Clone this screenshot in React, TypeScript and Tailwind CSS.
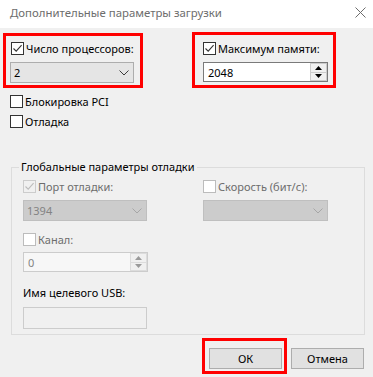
import React from 'react';

type CheckProps = { checked?: boolean; disabled?: boolean };

const Check: React.FC<CheckProps> = ({ checked, disabled }) => (
  <span
    className={`w-[13px] h-[13px] shrink-0 border flex items-center justify-center ${
      disabled ? (checked ? 'border-[#cccccc] bg-[#f0f0f0]' : 'border-[#bcbcbc] bg-white') : 'border-[#333333] bg-white'
    }`}
  >
    {checked && (
      <svg width="11" height="11" viewBox="0 0 11 11">
        <path d="M1.5 5.5 L4.2 8.2 L9.6 2.2" fill="none" stroke={disabled ? '#bcbcbc' : '#333333'} strokeWidth="1.1" />
      </svg>
    )}
  </span>
);

const CheckRow: React.FC<CheckProps & { label: string; className?: string }> = ({ label, checked, disabled, className }) => (
  <div className={`flex items-center h-[13px] gap-[2px] whitespace-nowrap ${className ?? ''}`}>
    <Check checked={checked} disabled={disabled} />
    <span className={`leading-none ${disabled ? 'text-[#6d6d6d]' : 'text-black'}`}>{label}</span>
  </div>
);

const Chevron: React.FC<{ color: string }> = ({ color }) => (
  <svg width="10" height="6" viewBox="0 0 10 6">
    <path d="M0.5 0.5 L5 5 L9.5 0.5" fill="none" stroke={color} strokeWidth="1" />
  </svg>
);

const Select: React.FC<{ value?: string; disabled?: boolean; className?: string }> = ({ value, disabled, className }) => (
  <div
    className={`w-[124px] h-[21px] border flex items-center justify-between pl-[3px] pr-[4px] ${
      disabled ? 'bg-[#cccccc] border-[#bfbfbf] text-[#838383]' : 'bg-[#e5e5e5] border-[#adadad] text-black'
    } ${className ?? ''}`}
  >
    <span className="leading-none">{value}</span>
    <Chevron color={disabled ? '#a6a6a6' : '#3c3c3c'} />
  </div>
);

const Spin: React.FC<{ value: string; disabled?: boolean; className?: string }> = ({ value, disabled, className }) => {
  const arrow = disabled ? '#9a9a9a' : '#000000';
  return (
    <div
      className={`w-[125px] h-[20px] border flex ${
        disabled ? 'bg-[#f7f7f7] border-[#cccccc] text-[#838383]' : 'bg-white border-[#7a7a7a] text-black'
      } ${className ?? ''}`}
    >
      <div className="flex-1 flex items-center pl-[4px] leading-none">{value}</div>
      <div className="w-[17px] flex flex-col">
        <div className={`flex-1 border flex items-center justify-center ${disabled ? 'border-[#dcdcdc] bg-[#f0f0f0]' : 'border-[#cccccc] bg-[#f0f0f0]'}`}>
          <svg width="7" height="4" viewBox="0 0 7 4">
            <path d="M0 4 L3.5 0 L7 4 Z" fill={arrow} />
          </svg>
        </div>
        <div className={`flex-1 border-x border-b flex items-center justify-center ${disabled ? 'border-[#dcdcdc] bg-[#f0f0f0]' : 'border-[#cccccc] bg-[#f0f0f0]'}`}>
          <svg width="7" height="4" viewBox="0 0 7 4">
            <path d="M0 0 L7 0 L3.5 4 Z" fill={arrow} />
          </svg>
        </div>
      </div>
    </div>
  );
};

const Button: React.FC<{ label: string }> = ({ label }) => (
  <div className="w-[73px] h-[21px] bg-[#e1e1e1] border border-[#adadad] flex items-center justify-center leading-none text-black">
    {label}
  </div>
);

export default function App() {
  return (
    <div className="w-[373px] h-[377px] bg-[#f0f0f0] overflow-hidden text-[11px] font-['Segoe_UI','Noto_Sans',sans-serif]">
      {/* Title bar */}
      <div className="h-[28px] bg-white flex items-center justify-between pl-[10px] pr-[6px] pb-[3px]">
        <span className="text-[#6d6d6d] leading-none text-[11.4px]">Дополнительные параметры загрузки</span>
        <svg width="11" height="11" viewBox="0 0 11 11" className="mr-[1px]">
          <path d="M0.5 0.5 L10.5 10.5 M10.5 0.5 L0.5 10.5" stroke="#6d6d6d" strokeWidth="1" />
        </svg>
      </div>

      {/* Top highlighted row */}
      <div className="flex items-start">
        <div className="ml-[3px] mt-[5px] w-[140px] h-[55px] border-[3px] border-[#ff0000] pl-[5px] pt-[6px]">
          <CheckRow label="Число процессоров:" checked />
          <Select value="2" className="mt-[7px] -ml-[1px]" />
        </div>
        <div className="ml-[49px] mt-[4px] w-[144px] h-[56px] border-[3px] border-[#ff0000] pl-[8px] pt-[7px]">
          <CheckRow label="Максимум памяти:" checked />
          <Spin value="2048" className="mt-[7px]" />
        </div>
      </div>

      <CheckRow label="Блокировка PCI" className="ml-[10px] mt-[7px]" />
      <CheckRow label="Отладка" className="ml-[10px] mt-[7px]" />

      {/* Group box */}
      <div className="relative ml-[11px] mt-[39px] w-[354px] h-[168px] border border-[#dcdcdc] pl-[11px] pt-[12px]">
        <span className="absolute -top-[7px] left-[7px] px-[2px] bg-[#f0f0f0] leading-none text-black whitespace-nowrap">
          Глобальные параметры отладки
        </span>
        <div className="flex">
          <div className="w-[180px]">
            <CheckRow label="Порт отладки:" checked disabled />
            <Select value="1394" disabled className="mt-[7px]" />
          </div>
          <div>
            <CheckRow label="Скорость (бит/с):" disabled />
            <Select disabled className="mt-[7px] w-[125px]" />
          </div>
        </div>
        <CheckRow label="Канал:" disabled className="mt-[12px]" />
        <Spin value="0" disabled className="mt-[6px] w-[124px]" />
        <div className="mt-[15px] leading-none text-black">Имя целевого USB:</div>
        <div className="mt-[9px] w-[124px] h-[22px] bg-[#f0f0f0] border border-[#cccccc]" />
      </div>

      {/* Buttons */}
      <div className="flex items-start mt-[3px]">
        <div className="ml-[202px] w-[85px] h-[36px] border-[3px] border-[#ff0000] pl-[4px] pt-[7px]">
          <Button label="ОК" />
        </div>
        <div className="ml-[4px] mt-[10px]">
          <Button label="Отмена" />
        </div>
      </div>
    </div>
  );
}
